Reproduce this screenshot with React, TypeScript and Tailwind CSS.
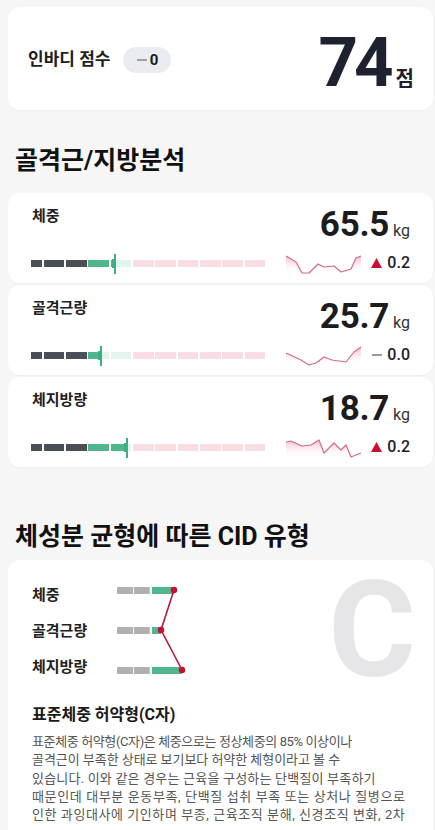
import React from "react";

const FONT = { fontFamily: "Roboto, 'Noto Sans CJK KR', sans-serif" };

type Metric = {
  label: string;
  value: string;
  fill3: number;
  fill4: number;
  marker: number;
  points: [number, number][];
  change: "up" | "flat";
  delta: string;
  id: string;
};

const metrics: Metric[] = [
  {
    label: "체중",
    value: "65.5",
    fill3: 21,
    fill4: 4.5,
    marker: 84,
    change: "up",
    delta: "0.2",
    id: "g1",
    points: [
      [0, 4], [10, 10], [16, 21], [23, 21], [32, 12], [38, 15], [48, 14], [55, 20], [65, 17], [70, 6], [75, 4],
    ],
  },
  {
    label: "골격근량",
    value: "25.7",
    fill3: 12,
    fill4: 0,
    marker: 70,
    change: "flat",
    delta: "0.0",
    id: "g2",
    points: [
      [0, 9], [15, 16], [23, 21], [30, 19], [38, 13], [46, 16], [60, 18], [68, 8], [75, 3],
    ],
  },
  {
    label: "체지방량",
    value: "18.7",
    fill3: 21,
    fill4: 16,
    marker: 96,
    change: "up",
    delta: "0.2",
    id: "g3",
    points: [
      [0, 6], [5, 5], [16, 10], [25, 9], [33, 4], [38, 17], [48, 7], [55, 14], [60, 9], [65, 21], [75, 17],
    ],
  },
];

function Bar({ m }: { m: Metric }) {
  const segs = Array.from({ length: 11 }, (_, i) => i);
  return (
    <div className="relative flex h-[7px] w-[235px] -ml-px gap-[1.5px]">
      {segs.map((i) => {
        if (i < 3)
          return (
            <div
              key={i}
              className={`h-full bg-[#4b4f58] ${i === 0 ? "w-[11px] shrink-0" : "flex-1"}`}
            />
          );
        if (i === 3 || i === 4) {
          const f = i === 3 ? m.fill3 : m.fill4;
          return (
            <div key={i} className="relative h-full flex-1 bg-[#e2f4eb]">
              <div className="absolute left-0 top-0 h-full bg-[#4fb68d]" style={{ width: f }} />
            </div>
          );
        }
        return <div key={i} className="h-full flex-1 bg-[#fadde3]" />;
      })}
      <div
        className="absolute top-[-6px] h-[20px] w-[2px] bg-[#3fae82]"
        style={{ left: m.marker - 1 }}
      />
      <div
        className="absolute top-[-1px] h-[9px] w-[2px] bg-[#3fae82]"
        style={{ left: m.marker - 3 }}
      />
    </div>
  );
}

function Spark({ m }: { m: Metric }) {
  const line = m.points.map((p) => `${p[0]},${p[1]}`).join(" ");
  const area = `0,22 ${line} 75,22`;
  return (
    <svg width="76" height="22" viewBox="0 0 76 22" className="ml-[21px] shrink-0 overflow-visible">
      <defs>
        <linearGradient id={m.id} x1="0" y1="0" x2="0" y2="1">
          <stop offset="0" stopColor="#f3a6b6" stopOpacity="0.75" />
          <stop offset="1" stopColor="#ffffff" stopOpacity="0" />
        </linearGradient>
      </defs>
      <polygon points={area} fill={`url(#${m.id})`} />
      <polyline points={line} fill="none" stroke="#d36b84" strokeWidth="1.2" strokeLinejoin="round" />
    </svg>
  );
}

function MetricCard({ m }: { m: Metric }) {
  return (
    <div className="h-[90px] rounded-xl bg-white pl-6 pr-[23px] pt-[12px] shadow-[0_1px_2px_rgba(0,0,0,0.03)]">
      <div className="flex items-start justify-between">
        <div className="text-[15px] font-bold leading-[22px] text-[#222]">{m.label}</div>
        <div className="mt-[2px] flex items-baseline">
          <span className="text-[35px] font-bold leading-none tracking-[-0.3px] text-[#1c1c1e]">{m.value}</span>
          <span className="ml-[4px] text-[16px] leading-none text-[#333]">kg</span>
        </div>
      </div>
      <div className="mt-[10px] flex h-[22px] items-center">
        <Bar m={m} />
        <Spark m={m} />
        {m.change === "up" ? (
          <svg width="11" height="10" viewBox="0 0 11 10" className="ml-[9px] shrink-0">
            <polygon points="5.5,0 11,10 0,10" fill="#c8102e" />
          </svg>
        ) : (
          <div className="ml-[10px] h-[1.5px] w-[10px] shrink-0 bg-[#999]" />
        )}
        <span className="ml-[5px] text-[16px] font-medium leading-none text-[#222]">{m.delta}</span>
      </div>
    </div>
  );
}

function CidChart() {
  const rows = [
    { y: 10, end: 59 },
    { y: 50, end: 46 },
    { y: 90, end: 67 },
  ];
  const pts = rows.map((r) => `${r.end},${r.y}`).join(" ");
  return (
    <svg width="72" height="100" viewBox="0 0 72 100" className="mt-[3px] shrink-0">
      {rows.map((r, i) => (
        <g key={i}>
          <rect x="2" y={r.y - 3} width="16" height="7" fill="#b1b1b1" />
          <rect x="18.8" y={r.y - 3} width="16" height="7" fill="#b1b1b1" />
          <rect x="37" y={r.y - 3} width={r.end - 37} height="7" fill="#4fb68d" />
        </g>
      ))}
      <polyline points={pts} fill="none" stroke="#b3193f" strokeWidth="1.6" />
      {rows.map((r, i) => (
        <circle key={i} cx={r.end} cy={r.y} r="3.2" fill="#c8102e" />
      ))}
    </svg>
  );
}

export default function App() {
  const para = [
    { t: "표준체중 허약형(C자)은 체중으로는 정상체중의 85% 이상이나", c: "tracking-[-0.38px]" },
    { t: "골격근이 부족한 상태로 보기보다 허약한 체형이라고 볼 수", c: "tracking-[-0.05px]" },
    { t: "있습니다. 이와 같은 경우는 근육을 구성하는 단백질이 부족하기", c: "tracking-[0.2px]" },
    { t: "때문인데 대부분 운동부족, 단백질 섭취 부족 또는 상처나 질병으로", c: "tracking-[0.62px]" },
    { t: "인한 과잉대사에 기인하며 부종, 근육조직 분해, 신경조직 변화, 2차", c: "tracking-[0.57px]" },
  ];
  return (
    <div className="min-h-[830px] w-[435px] bg-[#f6f6f6] pb-10 pl-2 pr-[2px] pt-[7px]" style={FONT}>
      {/* Score card */}
      <div className="h-[103px] rounded-xl bg-white pl-5 pr-[19px] pt-[21px] shadow-[0_1px_2px_rgba(0,0,0,0.03)]">
        <div className="flex items-center justify-between">
          <div className="mb-[5px] flex items-center">
            <span className="text-[17px] font-bold text-[#1e1e1e]">인바디 점수</span>
            <div className="ml-[13px] flex h-[26px] w-[48px] items-center justify-center gap-[3px] rounded-full bg-[#ebecf1]">
              <div className="h-[2px] w-[10px] bg-[#9da0a8]" />
              <span className="text-[15px] font-bold leading-none text-[#1a1a1a]">0</span>
            </div>
          </div>
          <div className="flex items-baseline">
            <span className="text-[69px] font-bold leading-none tracking-[-4px] text-[#1d2130]">74</span>
            <span className="ml-[6px] text-[20px] font-bold leading-none text-[#1d2130]">점</span>
          </div>
        </div>
      </div>

      <h2 className="mt-[35px] pl-[7px] text-[25px] font-bold leading-[32px] text-[#111]">골격근/지방분석</h2>

      <div className="mt-[16px] flex flex-col gap-[2px]">
        {metrics.map((m) => (
          <MetricCard key={m.id} m={m} />
        ))}
      </div>

      <h2 className="mt-[54px] pl-[7px] text-[25px] font-bold leading-[32px] text-[#111]">
        체성분 균형에 따른 CID 유형
      </h2>

      <div className="mt-[7px] rounded-xl bg-white pb-8 pl-6 pr-[17px] pt-[17px]">
        <div className="flex items-start">
          <div className="flex w-[83px] shrink-0 flex-col">
            {["체중", "골격근량", "체지방량"].map((t) => (
              <div key={t} className="text-[15px] font-bold leading-[36px] text-[#222]">
                {t}
              </div>
            ))}
          </div>
          <CidChart />
          <div className="ml-auto mt-[4px] h-[100px] text-[134px] font-bold leading-[100px] text-[#e6e6e9]">C</div>
        </div>
        <div className="mt-[18px] text-[16px] font-bold leading-[24px] text-[#1a1a1a]">표준체중 허약형(C자)</div>
        <div className="mt-[6px] text-[13px] leading-[18.25px] text-[#555]">
          {para.map((l, i) => (
            <div key={i} className={`whitespace-nowrap ${l.c}`}>
              {l.t}
            </div>
          ))}
        </div>
      </div>
    </div>
  );
}
